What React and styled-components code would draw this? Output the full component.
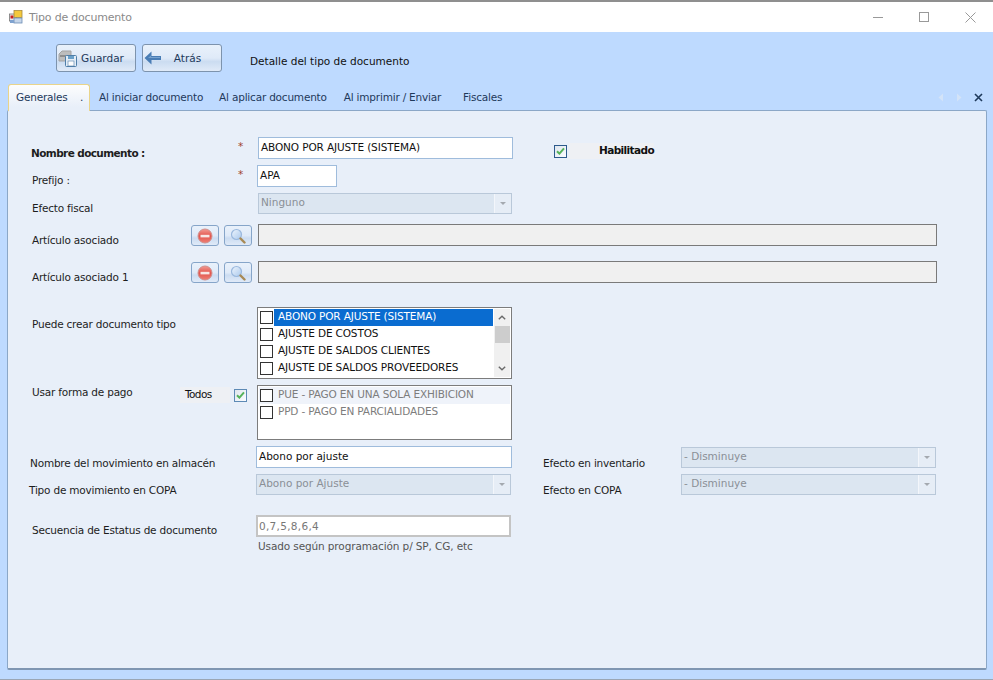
import React from 'react';
import styled, { createGlobalStyle } from 'styled-components';

const GlobalStyle = createGlobalStyle`
  html, body {
    margin: 0;
    padding: 0;
    height: 100%;
    overflow: hidden;
  }
  body {
    font-family: "DejaVu Sans", "Liberation Sans", sans-serif;
    font-size: 10.5px;
    color: #222;
  }
`;

const Window = styled.div`
  width: 993px;
  height: 680px;
  display: flex;
  flex-direction: column;
  background: #bedaff;
  border-top: 2px solid #8f8f8f;
  border-bottom: 1px solid #9aa6b5;
  box-sizing: border-box;
`;

const TitleBar = styled.div`
  height: 30px;
  flex: none;
  background: #fff;
  display: flex;
  align-items: center;
  padding: 0 0 0 9px;
  color: #8a8a8a;
`;

const TitleText = styled.span`
  margin-left: 6px;
  font-size: 11px;
  letter-spacing: -0.2px;
  flex: 1;
`;

const WinControl = styled.div`
  width: 46px;
  height: 30px;
  display: flex;
  align-items: center;
  justify-content: center;
`;

const Toolbar = styled.div`
  height: 52px;
  box-sizing: border-box;
  flex: none;
  display: flex;
  align-items: flex-start;
  padding: 12px 0 0 56px;
  gap: 6px;
`;

const ToolButton = styled.button`
  width: 80px;
  height: 28px;
  box-sizing: border-box;
  border: 1px solid #7d93ad;
  border-radius: 3px;
  background: linear-gradient(#e9f1fb 0%, #dfeaf8 50%, #cbdcf1 64%, #e0eaf8 100%);
  display: flex;
  align-items: center;
  padding: 0 0 0 1px;
  font: inherit;
  color: #1e395b;
`;

const ToolLabel = styled.span`
  flex: 1;
  text-align: center;
  padding-right: ${p => p.$pr}px;
`;

const ToolbarCaption = styled.span`
  margin: 11px 0 0 22px;
  color: #111;
`;

const TabStrip = styled.div`
  height: 26px;
  flex: none;
  display: flex;
  align-items: flex-end;
  padding-left: 8px;
  position: relative;
  z-index: 1;
`;

const ActiveTab = styled.div`
  width: 82px;
  height: 27px;
  margin-bottom: -1px;
  box-sizing: border-box;
  border: 1px solid #e9d48a;
  border-bottom: none;
  border-radius: 3px 3px 0 0;
  background: linear-gradient(#fdfdfd, #e8eff9 85%);
  padding: 6px 0 0 7px;
  color: #1e395b;
  letter-spacing: -0.2px;
  white-space: pre;
`;

const Tab = styled.div`
  color: #1e395b;
  height: 26px;
  line-height: 26px;
  margin-left: ${p => p.$left}px;
  letter-spacing: -0.2px;
  white-space: nowrap;
`;

const TabTools = styled.div`
  margin-left: auto;
  display: flex;
  align-items: center;
  gap: 12px;
  height: 26px;
  padding-right: 10px;
`;

const Panel = styled.div`
  width: 980px;
  height: 560px;
  margin-left: 7px;
  box-sizing: border-box;
  border: 1px solid #8ba7c7;
  border-bottom: 2px solid #7f96b2;
  border-radius: 2px;
  background: #e8eff9;
  padding-top: 26px;
  display: flex;
  flex-direction: column;
`;

const Row = styled.div`
  display: flex;
  align-items: flex-start;
  height: ${p => p.$h}px;
  margin-top: ${p => p.$mt || 0}px;
  padding-left: ${p => p.$pl || 24}px;
`;

const Label = styled.div`
  width: ${p => p.$w || 149}px;
  flex: none;
  line-height: 14px;
  padding-top: ${p => p.$pt}px;
  font-weight: ${p => (p.$bold ? 700 : 400)};
  letter-spacing: ${p => (p.$bold ? -0.6 : -0.2)}px;
  white-space: nowrap;
  color: #1d1d1d;
`;

const Side = styled.div`
  width: ${p => p.$w}px;
  flex: none;
  display: flex;
  gap: 5px;
  align-items: flex-start;
`;

const Star = styled.span`
  color: #a0432c;
  margin: 2px 0 0 57px;
  line-height: 14px;
`;

const TextInput = styled.div`
  width: ${p => p.$w}px;
  height: 22px;
  flex: none;
  box-sizing: border-box;
  border: 1px solid #9fbcdc;
  background: #fff;
  padding: 2px;
  line-height: 15px;
  letter-spacing: ${p => p.$ls || 0}px;
  color: #111;
`;

const Sequence = styled(TextInput)`
  border: 2px solid #c4c4c4;
  color: #777;
  padding: 2px 1px;
  letter-spacing: 0.3px;
`;

const ReadOnlyField = styled.div`
  width: 679px;
  height: 22px;
  box-sizing: border-box;
  border: 1px solid #7a7a7a;
  background: #f0f0f0;
  flex: none;
`;

const Combo = styled.div`
  width: ${p => p.$w || 255}px;
  height: 21px;
  margin-top: ${p => p.$mt || 0}px;
  flex: none;
  box-sizing: border-box;
  border: 1px solid #b9c8d9;
  background: #dce6f1;
  display: flex;
  color: #8a8f96;
  line-height: 15px;
`;

const ComboText = styled.span`
  flex: 1;
  padding: 1px 2px;
`;

const ComboArrow = styled.span`
  width: 16px;
  margin: 0 0 0 1px;
  background: #e6edf6;
  border-left: 1px solid #f3f6fb;
  display: flex;
  align-items: center;
  justify-content: center;

  &::after {
    content: '';
    border-left: 3px solid transparent;
    border-right: 3px solid transparent;
    border-top: 3px solid #a4a9af;
  }
`;

const IconButton = styled.button`
  width: 28px;
  height: 21px;
  padding: 0;
  margin-top: 1px;
  box-sizing: border-box;
  border: 1px solid #86a5c9;
  border-radius: 3px;
  background: linear-gradient(#e9f1fb 0%, #dfeaf8 50%, #cbdcf1 64%, #e0eaf8 100%);
  display: flex;
  align-items: center;
  justify-content: center;
`;

const CheckBox = styled.span`
  width: 13px;
  height: 13px;
  flex: none;
  box-sizing: border-box;
  border: 1px solid ${p => p.$border || '#2c5a8c'};
  background: linear-gradient(135deg, #dfe6ee, #fafcff);
  display: flex;
  align-items: center;
  justify-content: center;
`;

const EnabledBox = styled.div`
  display: flex;
  align-items: center;
  height: 16px;
  margin: 6px 0 0 41px;
`;

const EnabledLabel = styled.span`
  width: 85px;
  height: 16px;
  margin-left: 2px;
  box-sizing: border-box;
  padding-left: 30px;
  background: #eef0f4;
  font-weight: 700;
  letter-spacing: -0.6px;
  line-height: 15px;
  color: #111;
`;

const AllToggle = styled.div`
  width: 77px;
  flex: none;
  display: flex;
  align-items: center;
  height: 16px;
  margin: 2px 0 0 -1px;
`;

const AllLabel = styled.span`
  width: 50px;
  height: 16px;
  margin-right: 4px;
  box-sizing: border-box;
  padding-left: 5px;
  background: #eef0f4;
  line-height: 15px;
  letter-spacing: -0.6px;
  color: #111;
`;

const ListBox = styled.div`
  width: 255px;
  height: ${p => p.$h}px;
  flex: none;
  box-sizing: border-box;
  border: 1px solid #7c7c7c;
  background: #fff;
  padding: 1px;
  display: flex;
`;

const ListItems = styled.div`
  flex: 1;
  min-width: 0;
`;

const ListItem = styled.div`
  display: flex;
  align-items: center;
  height: 17px;
  background: ${p => (p.$shade ? '#eff3fa' : 'transparent')};
`;

const ListCheck = styled.span`
  width: 13px;
  height: 13px;
  box-sizing: border-box;
  flex: none;
  margin: 0 1px 0 1px;
  border: 1px solid #333;
  background: #fff;
`;

const ItemText = styled.span`
  flex: 1;
  height: 17px;
  line-height: 15px;
  padding-left: 4px;
  letter-spacing: -0.15px;
  white-space: nowrap;
  background: ${p => (p.$selected ? '#0a6cd0' : 'transparent')};
  color: ${p => (p.$selected ? '#fff' : p.$muted ? '#7d7d7d' : '#111')};
`;

const ScrollBar = styled.div`
  width: 16px;
  margin-left: 1px;
  flex: none;
  background: #f0f0f0;
  display: flex;
  flex-direction: column;
  justify-content: space-between;
  align-items: center;
  position: relative;
`;

const ScrollArrow = styled.span`
  height: 17px;
  display: flex;
  align-items: center;
`;

const ScrollThumb = styled.div`
  width: 15px;
  height: 17px;
  background: #cdcdcd;
  position: absolute;
  top: 17px;
`;

const RightGroup = styled.div`
  display: flex;
  align-items: flex-start;
  margin-left: ${p => p.$ml}px;
`;

const Hint = styled.div`
  margin: 2px 0 0 250px;
  line-height: 14px;
  letter-spacing: -0.12px;
  color: #555;
`;

const AppIcon = () => (
  <svg width="14" height="14" viewBox="0 0 14 14">
    <rect x="0.5" y="4" width="7" height="7" fill="#e8e8e8" stroke="#777" strokeWidth="0.8" />
    <rect x="1.5" y="5.5" width="3" height="3" fill="#c81e1e" />
    <rect x="5" y="0.5" width="8" height="7" fill="#f4c93c" stroke="#a98a3c" strokeWidth="0.8" />
    <rect x="5" y="8" width="8" height="5" fill="#c6d6ea" stroke="#6c8db5" strokeWidth="0.8" />
    <rect x="1" y="10" width="4" height="3" fill="#7fa2cf" />
  </svg>
);

const FloppyIcon = () => (
  <svg width="21" height="19" viewBox="0 0 21 19">
    <path d="M1 5 L4 2 H13 V12 H1 Z" fill="#bdbdbd" stroke="#a3a3a3" />
    <rect x="2" y="6" width="8" height="2" fill="#8f8f8f" />
    <rect x="7.5" y="6.5" width="11" height="11" rx="1" fill="#e3edf7" stroke="#4f7ea8" />
    <rect x="10" y="7" width="6" height="3" fill="#6aa0c9" />
    <rect x="10" y="12" width="6" height="5" fill="#fdfdfd" stroke="#4f7ea8" strokeWidth="0.6" />
  </svg>
);

const BackIcon = () => (
  <svg width="18" height="16" viewBox="0 0 18 16">
    <path d="M0.5 8 L7.5 1.5 L7.5 6 L17 6 L17 10 L7.5 10 L7.5 14.5 Z" fill="#4a7db5" />
    <path d="M4 8 L7 5.5 L7 7 L16 7 L16 8 Z" fill="#77a2cf" />
  </svg>
);

const RemoveIcon = () => (
  <svg width="16" height="16" viewBox="0 0 16 16">
    <defs>
      <linearGradient id="redGloss" x1="0" y1="0" x2="0" y2="1">
        <stop offset="0" stopColor="#f39a92" />
        <stop offset="0.5" stopColor="#e2544c" />
        <stop offset="1" stopColor="#ee8076" />
      </linearGradient>
    </defs>
    <circle cx="8" cy="8" r="7" fill="url(#redGloss)" stroke="#cf8f8c" />
    <rect x="3.5" y="6.8" width="9" height="2.6" fill="#f7e6e4" />
  </svg>
);

const SearchIcon = () => (
  <svg width="16" height="16" viewBox="0 0 16 16">
    <defs>
      <linearGradient id="lens" x1="0" y1="0" x2="1" y2="1">
        <stop offset="0" stopColor="#eef5fd" />
        <stop offset="1" stopColor="#a9c8ec" />
      </linearGradient>
    </defs>
    <circle cx="6.5" cy="6.5" r="5" fill="url(#lens)" stroke="#9bb9de" strokeWidth="1.2" />
    <path d="M10.5 10.5 L14.5 14.5" stroke="#a88a55" strokeWidth="2.4" strokeLinecap="round" />
  </svg>
);

const GreenCheck = () => (
  <svg width="9" height="8" viewBox="0 0 9 8">
    <path d="M1 4.2 L3.4 6.6 L8 1.4" fill="none" stroke="#55b25a" strokeWidth="2" />
  </svg>
);

const ArrowGlyph = ({ up }) => (
  <svg width="8" height="5" viewBox="0 0 8 5">
    <path d={up ? 'M0.8 4.2 L4 1.2 L7.2 4.2' : 'M0.8 0.8 L4 3.8 L7.2 0.8'} fill="none" stroke="#6a6a6a" strokeWidth="1.4" />
  </svg>
);

export default function App() {
  return (
    <Window>
      <GlobalStyle />
      <TitleBar>
        <AppIcon />
        <TitleText>Tipo de documento</TitleText>
        <WinControl>
          <svg width="10" height="10" viewBox="0 0 10 10"><path d="M0 5.5 H10" stroke="#999" /></svg>
        </WinControl>
        <WinControl>
          <svg width="10" height="10" viewBox="0 0 10 10"><rect x="0.5" y="0.5" width="9" height="9" fill="none" stroke="#999" /></svg>
        </WinControl>
        <WinControl>
          <svg width="11" height="11" viewBox="0 0 11 11"><path d="M0.5 0.5 L10.5 10.5 M10.5 0.5 L0.5 10.5" stroke="#999" /></svg>
        </WinControl>
      </TitleBar>

      <Toolbar>
        <ToolButton><FloppyIcon /><ToolLabel $pr={9}>Guardar</ToolLabel></ToolButton>
        <ToolButton><BackIcon /><ToolLabel $pr={8}>Atrás</ToolLabel></ToolButton>
        <ToolbarCaption>Detalle del tipo de documento</ToolbarCaption>
      </Toolbar>

      <TabStrip>
        <ActiveTab>{'Generales    .'}</ActiveTab>
        <Tab $left={9}>Al iniciar documento</Tab>
        <Tab $left={16}>Al aplicar documento</Tab>
        <Tab $left={17}>Al imprimir / Enviar</Tab>
        <Tab $left={22}>Fiscales</Tab>
        <TabTools>
          <svg width="6" height="9" viewBox="0 0 6 9"><path d="M5 0.5 V8.5 L0.5 4.5 Z" fill="#d3e3f8" /></svg>
          <svg width="6" height="9" viewBox="0 0 6 9"><path d="M1 0.5 V8.5 L5.5 4.5 Z" fill="#d3e3f8" /></svg>
          <svg width="9" height="9" viewBox="0 0 9 9"><path d="M1 1 L8 8 M8 1 L1 8" stroke="#1e395b" strokeWidth="1.6" /></svg>
        </TabTools>
      </TabStrip>

      <Panel>
        <Row $h={22} $pl={23}>
          <Label $w={150} $pt={9} $bold>Nombre documento :</Label>
          <Side $w={77}><Star>*</Star></Side>
          <TextInput $w={255} $ls={-0.12}>ABONO POR AJUSTE (SISTEMA)</TextInput>
          <EnabledBox>
            <CheckBox><GreenCheck /></CheckBox>
            <EnabledLabel>Habilitado</EnabledLabel>
          </EnabledBox>
        </Row>
        <Row $h={22} $mt={6}>
          <Label $pt={8}>Prefijo :</Label>
          <Side $w={76}><Star>*</Star></Side>
          <TextInput $w={80}>APA</TextInput>
        </Row>
        <Row $h={21} $mt={6}>
          <Label $w={226} $pt={8}>Efecto fiscal</Label>
          <Combo $w={254}><ComboText>Ninguno</ComboText><ComboArrow /></Combo>
        </Row>
        <Row $h={22} $mt={10}>
          <Label $w={159} $pt={9}>Artículo asociado</Label>
          <Side $w={67}>
            <IconButton><RemoveIcon /></IconButton>
            <IconButton><SearchIcon /></IconButton>
          </Side>
          <ReadOnlyField />
        </Row>
        <Row $h={22} $mt={15}>
          <Label $w={159} $pt={9}>Artículo asociado 1</Label>
          <Side $w={67}>
            <IconButton><RemoveIcon /></IconButton>
            <IconButton><SearchIcon /></IconButton>
          </Side>
          <ReadOnlyField />
        </Row>
        <Row $h={72} $mt={24}>
          <Label $w={225} $pt={10}>Puede crear documento tipo</Label>
          <ListBox $h={72}>
            <ListItems>
              <ListItem><ListCheck /><ItemText $selected>ABONO POR AJUSTE (SISTEMA)</ItemText></ListItem>
              <ListItem><ListCheck /><ItemText>AJUSTE DE COSTOS</ItemText></ListItem>
              <ListItem><ListCheck /><ItemText>AJUSTE DE SALDOS CLIENTES</ItemText></ListItem>
              <ListItem><ListCheck /><ItemText>AJUSTE DE SALDOS PROVEEDORES</ItemText></ListItem>
            </ListItems>
            <ScrollBar>
              <ScrollArrow><ArrowGlyph up /></ScrollArrow>
              <ScrollThumb />
              <ScrollArrow><ArrowGlyph /></ScrollArrow>
            </ScrollBar>
          </ListBox>
        </Row>
        <Row $h={55} $mt={6}>
          <Label $w={149} $pt={0}>Usar forma de pago</Label>
          <AllToggle>
            <AllLabel>Todos</AllLabel>
            <CheckBox $border="#5d8ab5"><GreenCheck /></CheckBox>
          </AllToggle>
          <ListBox $h={55}>
            <ListItems>
              <ListItem $shade><ListCheck /><ItemText $muted>PUE - PAGO EN UNA SOLA EXHIBICION</ItemText></ListItem>
              <ListItem><ListCheck /><ItemText $muted>PPD - PAGO EN PARCIALIDADES</ItemText></ListItem>
            </ListItems>
          </ListBox>
        </Row>
        <Row $h={22} $mt={6} $pl={22}>
          <Label $w={226} $pt={10}>Nombre del movimiento en almacén</Label>
          <TextInput $w={256}>Abono por ajuste</TextInput>
          <RightGroup $ml={31}>
            <Label $w={138} $pt={10}>Efecto en inventario</Label>
            <Combo $mt={1}><ComboText>- Disminuye</ComboText><ComboArrow /></Combo>
          </RightGroup>
        </Row>
        <Row $h={21} $mt={6} $pl={21}>
          <Label $w={227} $pt={9}>Tipo de movimiento en COPA</Label>
          <Combo><ComboText>Abono por Ajuste</ComboText><ComboArrow /></Combo>
          <RightGroup $ml={32}>
            <Label $w={138} $pt={9}>Efecto en COPA</Label>
            <Combo><ComboText>- Disminuye</ComboText><ComboArrow /></Combo>
          </RightGroup>
        </Row>
        <Row $h={22} $mt={20}>
          <Label $w={224} $pt={8}>Secuencia de Estatus de documento</Label>
          <Sequence $w={255}>0,7,5,8,6,4</Sequence>
        </Row>
        <Hint>Usado según programación p/ SP, CG, etc</Hint>
      </Panel>
    </Window>
  );
}
